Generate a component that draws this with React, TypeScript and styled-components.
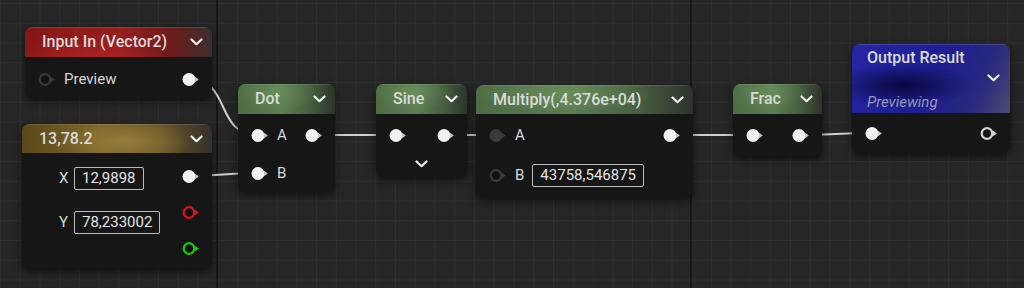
import React from "react";
import styled, { createGlobalStyle } from "styled-components";

const GlobalStyle = createGlobalStyle`
  html, body {
    margin: 0;
    padding: 0;
    background: #262626;
  }
  body {
    font-family: Roboto, "Noto Sans", sans-serif;
  }
`;

type Tone = "red" | "gold" | "green" | "blue";
type PinKind = "filled" | "hollow" | "dim" | "red" | "green" | "ring";

const headerBg: Record<Tone, string> = {
  red: `radial-gradient(ellipse 60% 90% at 35% 100%, rgba(190,40,40,0.55), transparent 70%),
        linear-gradient(90deg, #861717 0%, #9a1d1d 50%, #6e1b1b 78%, #3b2f2f 100%)`,
  gold: `radial-gradient(ellipse 50% 100% at 55% 60%, rgba(170,145,70,0.6), transparent 70%),
        linear-gradient(90deg, #5a4818 0%, #7d6628 40%, #6a5828 72%, #34302a 100%)`,
  green: `radial-gradient(ellipse 60% 90% at 40% 30%, rgba(120,160,105,0.45), transparent 70%),
        linear-gradient(90deg, #4d6c44 0%, #5b7d50 45%, #465e3f 75%, #2d332c 100%)`,
  blue: `radial-gradient(ellipse 45% 32% at 32% 60%, #08083e 0%, rgba(8,8,62,0) 100%),
        linear-gradient(115deg, #2626a4 0%, #1e1e94 50%, #28287e 78%, #4c4c72 100%)`,
};

const pinLook: Record<PinKind, { fill: string; stroke?: string; arrow: string }> = {
  filled: { fill: "#f2f2f2", arrow: "#c8c8c8" },
  hollow: { fill: "#111111", stroke: "#3a3a3a", arrow: "#3a3a3a" },
  dim: { fill: "#3a3a3a", arrow: "#3a3a3a" },
  red: { fill: "#111111", stroke: "#d41616", arrow: "#d41616" },
  green: { fill: "#111111", stroke: "#18c418", arrow: "#18c418" },
  ring: { fill: "#151515", stroke: "#d2d2d2", arrow: "#d2d2d2" },
};

// grid canvas, minor lines every ~19.75px and two dark major lines
const Canvas = styled.div`
  position: relative;
  width: 1024px;
  height: 288px;
  overflow: hidden;
  background-color: #262626;
  background-image:
    linear-gradient(90deg, transparent 216px, #161616 216px, #161616 218px, transparent 218px,
      transparent 690px, #161616 690px, #161616 692px, transparent 692px),
    linear-gradient(90deg, #2f2f2f 1px, transparent 1px),
    linear-gradient(#2f2f2f 1px, transparent 1px);
  background-size: 100% 100%, 19.75px 19.75px, 19.75px 19.75px;
  background-position: 0 0, 0 0, 0 3px;
`;

const Wires = styled.svg`
  position: absolute;
  left: 0;
  top: 0;
`;

const Node = styled.div<{ $x: number; $y: number; $w: number }>`
  position: absolute;
  left: ${(p) => p.$x}px;
  top: ${(p) => p.$y}px;
  width: ${(p) => p.$w}px;
  background: #161616;
  border-radius: 7px;
  overflow: hidden;
  box-shadow: 0 3px 8px rgba(0, 0, 0, 0.6);
  color: #dcdcdc;
`;

const Header = styled.div<{ $tone: Tone; $h?: number }>`
  display: flex;
  align-items: center;
  justify-content: space-between;
  height: ${(p) => p.$h ?? 30}px;
  padding: 0 9px 0 17px;
  background: ${(p) => headerBg[p.$tone]};
  box-shadow: inset 0 1px 0 rgba(255, 255, 255, 0.12);
`;

const OutputHeader = styled.div`
  display: flex;
  flex-direction: column;
  height: 69px;
  box-sizing: border-box;
  padding: 4px 10px 0 15px;
  background: ${headerBg.blue};
  box-shadow: inset 0 1px 0 rgba(255, 255, 255, 0.15);
`;

const Title = styled.span`
  font-size: 16px;
  font-weight: 500;
  line-height: 20px;
  color: #dadada;
  white-space: nowrap;
`;

const ChevronSlot = styled.div`
  display: flex;
  justify-content: flex-end;
  align-items: center;
  height: 20px;
`;

const Previewing = styled.span`
  margin-top: 4px;
  font-size: 15px;
  font-style: italic;
  line-height: 20px;
  color: #9898b4;
`;

const Body = styled.div<{ $top?: number; $bottom?: number }>`
  padding-top: ${(p) => p.$top ?? 2}px;
  padding-bottom: ${(p) => p.$bottom ?? 0}px;
`;

const Row = styled.div<{ $h?: number }>`
  display: flex;
  align-items: center;
  height: ${(p) => p.$h ?? 38}px;
  padding: 0 12px 0 13px;
`;

const Spacer = styled.div`
  flex: 1;
`;

const ExpandRow = styled.div`
  display: flex;
  justify-content: center;
  align-items: center;
  height: 20px;
`;

const PinLabel = styled.span`
  margin-left: 8px;
  font-size: 15px;
  color: #d8d8d8;
`;

const Columns = styled.div`
  display: flex;
  justify-content: space-between;
  padding-bottom: 3px;
`;

const InputColumn = styled.div`
  display: flex;
  flex-direction: column;
  padding: 3px 0 0 37px;
`;

const OutputColumn = styled.div`
  display: flex;
  flex-direction: column;
  padding: 5px 12px 0 0;
`;

const FieldRow = styled.div`
  display: flex;
  align-items: center;
  height: 44px;
  gap: 6px;
`;

const OutRow = styled.div`
  display: flex;
  align-items: center;
  height: 36px;
`;

const FieldLabel = styled.span`
  width: 9px;
  font-size: 15px;
  color: #d8d8d8;
`;

const ValueBox = styled.div`
  display: flex;
  align-items: center;
  height: 23px;
  box-sizing: border-box;
  padding: 0 7px;
  border: 1px solid #bcbcbc;
  border-radius: 2px;
  font-size: 15px;
  color: #e4e4e4;
  white-space: nowrap;
`;

const InlineBox = styled(ValueBox)`
  margin-left: 8px;
`;

const Chevron = () => (
  <svg width="13" height="8" viewBox="0 0 13 8">
    <polyline points="1.5,1.5 6.5,6.2 11.5,1.5" fill="none" stroke="#f0f0f0" strokeWidth="2.2" strokeLinecap="round" strokeLinejoin="round" />
  </svg>
);

const Pin = ({ kind }: { kind: PinKind }) => {
  const look = pinLook[kind];
  return (
    <svg width="18" height="15" viewBox="0 0 18 15" style={{ flexShrink: 0 }}>
      {look.stroke ? (
        <circle cx="7" cy="7.5" r="5.3" fill={look.fill} stroke={look.stroke} strokeWidth="2.3" />
      ) : (
        <circle cx="7" cy="7.5" r="6.5" fill={look.fill} />
      )}
      <path d="M13 4.7 L16.8 7.5 L13 10.3 Z" fill={look.arrow} />
    </svg>
  );
};

const wires = [
  "M189 79 C 232 79, 214 135, 258 135",
  "M189 176 C 222 176, 224 173, 258 173",
  "M312 135 L 395 135",
  "M444 135 L 496 135",
  "M670 135 L 753 135",
  "M799 135 C 836 135, 836 133, 872 133",
];

const App = () => (
  <>
    <GlobalStyle />
    <Canvas>
      <Wires width="1024" height="288">
        {wires.map((d) => (
          <path key={d} d={d} fill="none" stroke="#cfcfcf" strokeWidth="2" />
        ))}
      </Wires>

      <Node $x={25} $y={27} $w={187}>
        <Header $tone="red">
          <Title>Input In (Vector2)</Title>
          <Chevron />
        </Header>
        <Body $top={3}>
          <Row>
            <Pin kind="hollow" />
            <PinLabel>Preview</PinLabel>
            <Spacer />
            <Pin kind="filled" />
          </Row>
        </Body>
      </Node>

      <Node $x={22} $y={124} $w={190}>
        <Header $tone="gold" $h={29}>
          <Title>13,78.2</Title>
          <Chevron />
        </Header>
        <Columns>
          <InputColumn>
            <FieldRow>
              <FieldLabel>X</FieldLabel>
              <ValueBox>12,9898</ValueBox>
            </FieldRow>
            <FieldRow>
              <FieldLabel>Y</FieldLabel>
              <ValueBox>78,233002</ValueBox>
            </FieldRow>
          </InputColumn>
          <OutputColumn>
            <OutRow><Pin kind="filled" /></OutRow>
            <OutRow><Pin kind="red" /></OutRow>
            <OutRow><Pin kind="green" /></OutRow>
          </OutputColumn>
        </Columns>
      </Node>

      <Node $x={238} $y={84} $w={97}>
        <Header $tone="green">
          <Title>Dot</Title>
          <Chevron />
        </Header>
        <Body>
          <Row>
            <Pin kind="filled" />
            <PinLabel>A</PinLabel>
            <Spacer />
            <Pin kind="filled" />
          </Row>
          <Row>
            <Pin kind="filled" />
            <PinLabel>B</PinLabel>
          </Row>
        </Body>
      </Node>

      <Node $x={376} $y={84} $w={91}>
        <Header $tone="green">
          <Title>Sine</Title>
          <Chevron />
        </Header>
        <Body $bottom={3}>
          <Row>
            <Pin kind="filled" />
            <Spacer />
            <Pin kind="filled" />
          </Row>
          <ExpandRow>
            <Chevron />
          </ExpandRow>
        </Body>
      </Node>

      <Node $x={476} $y={85} $w={217}>
        <Header $tone="green" $h={29}>
          <Title>Multiply(,4.376e+04)</Title>
          <Chevron />
        </Header>
        <Body $bottom={2}>
          <Row>
            <Pin kind="dim" />
            <PinLabel>A</PinLabel>
            <Spacer />
            <Pin kind="filled" />
          </Row>
          <Row $h={42}>
            <Pin kind="hollow" />
            <PinLabel>B</PinLabel>
            <InlineBox>43758,546875</InlineBox>
          </Row>
        </Body>
      </Node>

      <Node $x={733} $y={84} $w={89}>
        <Header $tone="green">
          <Title>Frac</Title>
          <Chevron />
        </Header>
        <Body $bottom={3}>
          <Row>
            <Pin kind="filled" />
            <Spacer />
            <Pin kind="filled" />
          </Row>
        </Body>
      </Node>

      <Node $x={852} $y={44} $w={158}>
        <OutputHeader>
          <Title>Output Result</Title>
          <ChevronSlot>
            <Chevron />
          </ChevronSlot>
          <Previewing>Previewing</Previewing>
        </OutputHeader>
        <Body $top={1} $bottom={1}>
          <Row>
            <Pin kind="filled" />
            <Spacer />
            <Pin kind="ring" />
          </Row>
        </Body>
      </Node>
    </Canvas>
  </>
);

export default App;
